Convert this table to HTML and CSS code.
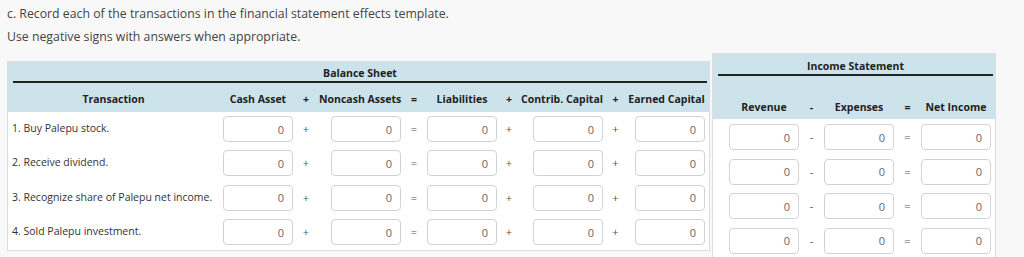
FILE: index.html
```html
<!DOCTYPE html>
<html>
<head>
<meta charset="utf-8">
<link rel="stylesheet" href="styles.css">
</head>
<body>
<div class="page">
  <div class="intro">
    <p>c. Record each of the transactions in the financial statement effects template.</p>
    <p>Use negative signs with answers when appropriate.</p>
  </div>
  <div class="sheets">
    <div class="tbl bs">
      <div class="head">
        <div class="group">Balance Sheet</div>
        <div class="row-bs cols">
          <div class="hc first">Transaction</div>
          <div class="hc">Cash Asset</div>
          <div class="hop">+</div>
          <div class="hc">Noncash Assets</div>
          <div class="hop">=</div>
          <div class="hc">Liabilities</div>
          <div class="hop">+</div>
          <div class="hc">Contrib. Capital</div>
          <div class="hop">+</div>
          <div class="hc">Earned Capital</div>
        </div>
      </div>
      <div class="body">
        <div class="row-bs line">
          <div class="label">1. Buy Palepu stock.</div>
          <div class="cell"><input class="num" type="text" value="0"></div><div class="op">+</div>
          <div class="cell"><input class="num" type="text" value="0"></div><div class="op">=</div>
          <div class="cell"><input class="num" type="text" value="0"></div><div class="op">+</div>
          <div class="cell"><input class="num" type="text" value="0"></div><div class="op">+</div>
          <div class="cell"><input class="num" type="text" value="0"></div>
        </div>
        <div class="row-bs line">
          <div class="label">2. Receive dividend.</div>
          <div class="cell"><input class="num" type="text" value="0"></div><div class="op">+</div>
          <div class="cell"><input class="num" type="text" value="0"></div><div class="op">=</div>
          <div class="cell"><input class="num" type="text" value="0"></div><div class="op">+</div>
          <div class="cell"><input class="num" type="text" value="0"></div><div class="op">+</div>
          <div class="cell"><input class="num" type="text" value="0"></div>
        </div>
        <div class="row-bs line">
          <div class="label">3. Recognize share of Palepu net income.</div>
          <div class="cell"><input class="num" type="text" value="0"></div><div class="op">+</div>
          <div class="cell"><input class="num" type="text" value="0"></div><div class="op">=</div>
          <div class="cell"><input class="num" type="text" value="0"></div><div class="op">+</div>
          <div class="cell"><input class="num" type="text" value="0"></div><div class="op">+</div>
          <div class="cell"><input class="num" type="text" value="0"></div>
        </div>
        <div class="row-bs line">
          <div class="label">4. Sold Palepu investment.</div>
          <div class="cell"><input class="num" type="text" value="0"></div><div class="op">+</div>
          <div class="cell"><input class="num" type="text" value="0"></div><div class="op">=</div>
          <div class="cell"><input class="num" type="text" value="0"></div><div class="op">+</div>
          <div class="cell"><input class="num" type="text" value="0"></div><div class="op">+</div>
          <div class="cell"><input class="num" type="text" value="0"></div>
        </div>
      </div>
    </div>

    <div class="tbl is">
      <div class="head">
        <div class="group">Income Statement</div>
        <div class="row-is cols">
          <div></div>
          <div class="hc">Revenue</div>
          <div class="hop">-</div>
          <div class="hc">Expenses</div>
          <div class="hop">=</div>
          <div class="hc">Net Income</div>
        </div>
      </div>
      <div class="body">
        <div class="row-is line">
          <div></div>
          <div class="cell"><input class="num" type="text" value="0"></div><div class="op">-</div>
          <div class="cell"><input class="num" type="text" value="0"></div><div class="op">=</div>
          <div class="cell"><input class="num" type="text" value="0"></div>
        </div>
        <div class="row-is line">
          <div></div>
          <div class="cell"><input class="num" type="text" value="0"></div><div class="op">-</div>
          <div class="cell"><input class="num" type="text" value="0"></div><div class="op">=</div>
          <div class="cell"><input class="num" type="text" value="0"></div>
        </div>
        <div class="row-is line">
          <div></div>
          <div class="cell"><input class="num" type="text" value="0"></div><div class="op">-</div>
          <div class="cell"><input class="num" type="text" value="0"></div><div class="op">=</div>
          <div class="cell"><input class="num" type="text" value="0"></div>
        </div>
        <div class="row-is line">
          <div></div>
          <div class="cell"><input class="num" type="text" value="0"></div><div class="op">-</div>
          <div class="cell"><input class="num" type="text" value="0"></div><div class="op">=</div>
          <div class="cell"><input class="num" type="text" value="0"></div>
        </div>
      </div>
    </div>
  </div>
</div>
</body>
</html>
```

FILE: styles.css
```css
html, body {
  margin: 0;
  padding: 0;
  background: #f8f8f8;
}
body {
  font-family: "Open Sans", "DejaVu Sans", sans-serif;
  color: #333;
}
.page {
  padding: 2px 0 0 7px;
}
.intro p {
  margin: 0;
  font-size: 12.3px;
  line-height: 23px;
  color: #444;
}
.sheets {
  display: flex;
  align-items: flex-start;
  gap: 2px;
  margin-top: 5px;
}
.tbl {
  background: #fff;
  border: 1px solid #ddd;
  box-sizing: border-box;
}
.bs {
  width: 703px;
  margin-top: 8px;
}
.is {
  width: 284px;
}
.head {
  background: #cde3eb;
}
.group {
  font-size: 10.5px;
  font-weight: 700;
  line-height: 14px;
  text-align: center;
  color: #222;
  border-bottom: 2px solid #222;
  margin: 0 2px 0 5px;
}
.bs .group { padding: 4px 0 1px; }
.is .group { padding: 5px 0 1px; }
.row-bs {
  display: grid;
  grid-template-columns: 215px 70px 26px 82px 26px 70px 24px 82px 25px 77px 4px;
}
.row-is {
  display: grid;
  grid-template-columns: 16px 70px 25px 70px 27px 70px 4px;
}
.cols {
  font-size: 10.5px;
  font-weight: 700;
  line-height: 14px;
  color: #222;
}
.bs .cols { padding: 9px 0 6px; }
.is .cols { padding: 24px 0 5px; }
.hc {
  text-align: center;
  white-space: nowrap;
}
.hc.first {
  padding-right: 4px;
}
.hop {
  text-align: center;
}
.bs .line {
  height: 34.4px;
  padding-top: 4px;
  box-sizing: border-box;
}
.is .line {
  height: 34.6px;
  padding-top: 5px;
  box-sizing: border-box;
}
.label {
  font-size: 10.5px;
  line-height: 25px;
  padding-left: 4px;
  color: #333;
  white-space: nowrap;
}
.cell {
  display: flex;
  justify-content: flex-end;
}
.op {
  font-size: 11px;
  line-height: 26px;
  text-align: center;
  color: #555;
}
.num {
  width: 70px;
  height: 26px;
  box-sizing: border-box;
  border: 1px solid #d2d2d2;
  border-radius: 4px;
  background: #fff;
  font-family: "Open Sans", "DejaVu Sans", sans-serif;
  font-size: 11px;
  color: #666;
  text-align: right;
  padding: 0 8px 0 4px;
  margin: 0;
  outline: none;
}
```
